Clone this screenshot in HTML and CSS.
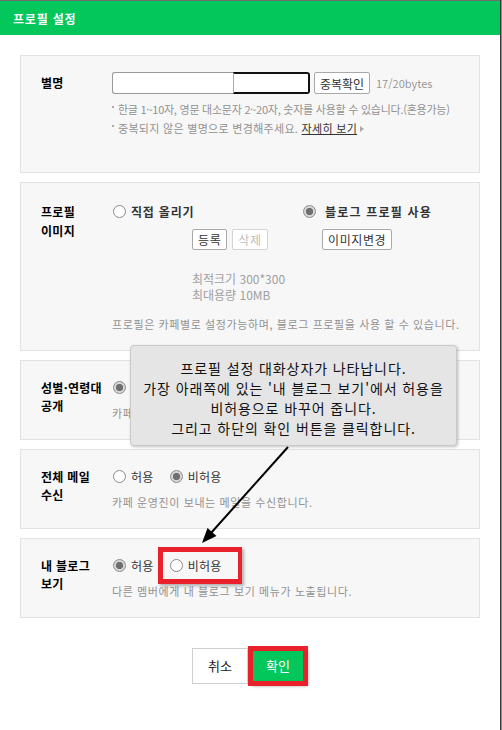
FILE: index.html
```html
<!DOCTYPE html>
<html lang="ko">
<head>
    <meta charset="UTF-8">
    <meta name="viewport" content="width=device-width, initial-scale=1.0">
    <title>프로필 설정</title>
    <link rel="stylesheet" href="styles.css">
</head>
<body>
    <div class="window">
        <div class="header">
            <h1>프로필 설정</h1>
        </div>

        <div class="content">
            <div class="section sec-nick">
                <div class="label">별명</div>
                <div class="field">
                    <div class="nick-row">
                        <div class="nick-box">
                            <span class="nick-mask"></span>
                            <span class="nick-rest"></span>
                        </div>
                        <button type="button" class="btn btn-check">중복확인</button>
                        <span class="bytes">17/20bytes</span>
                    </div>
                    <p class="note dot first">한글 1~10자, 영문 대소문자 2~20자, 숫자를 사용할 수 있습니다.(혼용가능)</p>
                    <p class="note dot second">중복되지 않은 별명으로 변경해주세요. <a class="more">자세히 보기</a><span class="tri"></span></p>
                </div>
            </div>

            <div class="section sec-image">
                <div class="label">프로필<br>이미지</div>
                <div class="field">
                    <div class="image-cols">
                        <div class="col-left">
                            <label class="option strong"><span class="radio"></span>직접 올리기</label>
                            <div class="btn-row indent">
                                <button type="button" class="btn btn-small">등록</button>
                                <button type="button" class="btn btn-small off">삭제</button>
                            </div>
                            <div class="size-info indent">
                                최적크기 300*300<br>최대용량 10MB
                            </div>
                        </div>
                        <div class="col-right">
                            <label class="option strong wide"><span class="radio on"></span>블로그 프로필 사용</label>
                            <div class="btn-row indent-r">
                                <button type="button" class="btn btn-small">이미지변경</button>
                            </div>
                        </div>
                    </div>
                    <p class="note plain">프로필은 카페별로 설정가능하며, 블로그 프로필을 사용 할 수 있습니다.</p>
                </div>
            </div>

            <div class="section sec-row">
                <div class="label">성별·연령대<br>공개</div>
                <div class="field">
                    <div class="options">
                        <label class="option"><span class="radio on"></span>허용</label>
                        <label class="option"><span class="radio"></span>비허용</label>
                    </div>
                    <p class="note plain">카페 멤버에게 성별·연령대를 공개합니다.</p>
                </div>
            </div>

            <div class="section sec-row">
                <div class="label">전체 메일<br>수신</div>
                <div class="field">
                    <div class="options">
                        <label class="option"><span class="radio"></span>허용</label>
                        <label class="option"><span class="radio on"></span>비허용</label>
                    </div>
                    <p class="note plain">카페 운영진이 보내는 메일을 수신합니다.</p>
                </div>
            </div>

            <div class="section sec-row">
                <div class="label">내 블로그<br>보기</div>
                <div class="field">
                    <div class="options">
                        <label class="option"><span class="radio on"></span>허용</label>
                        <label class="option"><span class="radio"></span>비허용</label>
                    </div>
                    <p class="note plain">다른 멤버에게 내 블로그 보기 메뉴가 노출됩니다.</p>
                </div>
            </div>
        </div>

        <div class="footer">
            <button type="button" class="btn-cancel">취소</button>
            <button type="button" class="btn-ok marked">확인</button>
        </div>

        <!-- annotation overlays -->
        <div class="tooltip">
            프로필 설정 대화상자가 나타납니다.<br>
            가장 아래쪽에 있는 '내 블로그 보기'에서 허용을<br>
            비허용으로 바꾸어 줍니다.<br>
            그리고 하단의 확인 버튼을 클릭합니다.
        </div>
        <svg class="arrow" width="100" height="110" viewBox="0 0 100 110">
            <line x1="93" y1="7" x2="16" y2="93" stroke="#000" stroke-width="2"/>
            <polygon points="7,103 21.5,96 12.5,88" fill="#000"/>
        </svg>
        <div class="mark-box"></div>
    </div>
    <div class="edge"></div>
</body>
</html>
```

FILE: styles.css
```css
body {
    margin: 0;
    display: flex;
    background: #fff;
    font-family: "Noto Sans CJK KR", "Noto Sans", sans-serif;
    font-size: 12px;
    color: #333;
}

.window {
    position: relative;
    width: 500px;
    height: 730px;
    background: #fff;
}

.edge {
    width: 2px;
    height: 730px;
    background: linear-gradient(to right, #3a3a3a 1px, #8a8a8a 1px);
}

.header {
    height: 34px;
    border-top: 1px solid #6e6e6e;
    background: #03c75a;
    display: flex;
    align-items: center;
    padding-left: 13px;
}

.header h1 {
    margin: 0;
    font-size: 12px;
    font-weight: bold;
    letter-spacing: 0.8px;
    color: #fff;
}

.content {
    padding: 20px 20px 0;
    display: flex;
    flex-direction: column;
    gap: 9px;
}

.section {
    display: flex;
    background: #f7f7f7;
    border: 1px solid #e2e2e2;
    padding: 18px 20px 18px 20px;
}

.label {
    width: 71px;
    flex-shrink: 0;
    font-weight: bold;
    color: #000;
    line-height: 18px;
    letter-spacing: 0.3px;
}

.field {
    flex: 1;
    min-width: 0;
}

.note {
    margin: 0;
    font-size: 11px;
    color: #929292;
    line-height: 16px;
    letter-spacing: 0.6px;
    white-space: nowrap;
}

/* nickname */
.sec-nick {
    padding-top: 16px;
    padding-bottom: 34px;
}

.sec-nick .label {
    line-height: 22px;
}

.nick-row {
    display: flex;
    align-items: center;
    height: 22px;
}

.nick-box {
    display: flex;
    width: 198px;
    height: 22px;
}

.nick-mask {
    width: 120px;
    background: #fff;
    border: 1px solid #999;
    border-right: none;
    border-radius: 3px 0 0 3px;
}

.nick-rest {
    flex: 1;
    background: #fff;
    border: 2px solid #111;
    border-left: 1px solid #aaa;
    border-radius: 0 3px 3px 0;
}

.btn {
    font-family: inherit;
    background: #fff;
    border: 1px solid #a9a9a9;
    border-radius: 2px;
    color: #333;
    padding: 0 5px;
    cursor: pointer;
}

.btn-check {
    margin-left: 4px;
    width: 56px;
    height: 22px;
    font-size: 12px;
    padding: 0;
}

.bytes {
    margin-left: 6px;
    color: #999;
    font-size: 11px;
}

.sec-nick .note {
    line-height: 19px;
}

.note.first {
    margin-top: 6px;
    letter-spacing: -0.25px;
}

.note.second {
    letter-spacing: 0.3px;
}

.note.dot::before {
    content: "";
    display: inline-block;
    width: 2px;
    height: 2px;
    background: #aaa;
    margin-right: 4px;
    vertical-align: 6px;
}

.more {
    color: #333;
    text-decoration: underline;
}

.tri {
    display: inline-block;
    margin-left: 3px;
    border-left: 4px solid #aaa;
    border-top: 3px solid transparent;
    border-bottom: 3px solid transparent;
    vertical-align: 1px;
}

/* profile image */
.sec-image {
    padding-top: 19px;
}

.sec-image .label {
    line-height: 19px;
}

.image-cols {
    display: flex;
}

.col-left {
    width: 190px;
}

.option {
    display: inline-flex;
    align-items: center;
    gap: 5px;
    height: 18px;
    color: #333;
    font-size: 12px;
    letter-spacing: 0.3px;
}

.option.strong {
    font-weight: bold;
    color: #333;
    letter-spacing: 0.8px;
}

.option.wide {
    gap: 9px;
    letter-spacing: 1.2px;
}

.radio {
    width: 11px;
    height: 11px;
    border: 1px solid #8a8a8a;
    border-radius: 50%;
    background: #fff;
    margin-left: 1px;
}

.radio.on {
    background: radial-gradient(circle, #6f6f6f 0 3.4px, #d8d8d8 3.9px);
}

.btn-row {
    display: flex;
    gap: 5px;
    margin-top: 8px;
}

.btn-small {
    height: 21px;
    font-size: 12px;
    letter-spacing: 0.6px;
}

.btn-small.off {
    color: #bdbdbd;
    border-color: #d4d4d4;
}

.indent {
    margin-left: 80px;
}

.indent-r {
    margin-left: 20px;
}

.size-info {
    margin-top: 21px;
    line-height: 16px;
    color: #a0a0a0;
    font-size: 12px;
}

.sec-image .note {
    margin-top: 13px;
}

/* simple radio rows */
.options {
    display: flex;
    gap: 15px;
    height: 18px;
}

.sec-row .note {
    margin-top: 8px;
}

/* footer buttons */
.footer {
    display: flex;
    justify-content: center;
    gap: 2px;
    margin-top: 30px;
    padding-right: 2px;
}

.btn-cancel,
.btn-ok {
    width: 56px;
    height: 36px;
    font-family: inherit;
    font-size: 13px;
    cursor: pointer;
}

.btn-cancel {
    background: #fff;
    border: 1px solid #cfcfcf;
    color: #222;
}

.btn-ok {
    background: #03c75a;
    border: none;
    color: #fff;
}

.marked {
    outline: 5px solid #e8212b;
    outline-offset: -3px;
    box-shadow: 2px 2px 3px rgba(0, 0, 0, 0.35);
}

/* annotation */
.tooltip {
    position: absolute;
    left: 130px;
    top: 345px;
    width: 327px;
    height: 101px;
    box-sizing: border-box;
    padding-top: 12px;
    background: #e5e5e5;
    border: 1px solid #cacaca;
    border-radius: 4px;
    box-shadow: 1px 1px 3px rgba(0, 0, 0, 0.25);
    text-align: center;
    font-size: 14px;
    line-height: 20px;
    letter-spacing: 0.9px;
    color: #111;
}

.arrow {
    position: absolute;
    left: 195px;
    top: 440px;
}

.mark-box {
    position: absolute;
    left: 158px;
    top: 547px;
    width: 84px;
    height: 37px;
    box-sizing: border-box;
    border: 5px solid #e8212b;
    border-right-width: 4px;
    box-shadow: 2px 2px 3px rgba(0, 0, 0, 0.3);
}
```
